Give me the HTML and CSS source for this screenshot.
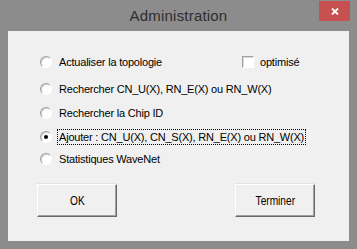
FILE: index.html
```html
<!DOCTYPE html>
<html lang="fr">

<head>
    <meta charset="UTF-8">
    <title>Administration</title>
    <link rel="stylesheet" href="styles.css">
</head>

<body>
    <div class="window">
        <div class="titlebar">
            <span class="title">Administration</span>
            <span class="close">
                <svg width="8" height="7" viewBox="0 0 8 7">
                    <path d="M1 0.5 L7 6.5 M7 0.5 L1 6.5" stroke="#fff" stroke-width="1.8" fill="none"/>
                </svg>
            </span>
        </div>

        <div class="client">
            <div class="options">
                <div class="row row-first">
                    <label class="option option-main"><span class="radio"></span><span class="text">Actualiser la topologie</span></label>
                    <label class="option"><span class="check"></span><span class="text">optimisé</span></label>
                </div>
                <div class="row row-second">
                    <label class="option"><span class="radio"></span><span class="text">Rechercher CN_U(X), RN_E(X) ou RN_W(X)</span></label>
                </div>
                <div class="row">
                    <label class="option"><span class="radio"></span><span class="text">Rechercher la Chip ID</span></label>
                </div>
                <div class="row">
                    <label class="option"><span class="radio checked"></span><span class="text focus">Ajouter : CN_U(X), CN_S(X), RN_E(X) ou RN_W(X)</span></label>
                </div>
                <div class="row row-last">
                    <label class="option"><span class="radio"></span><span class="text">Statistiques WaveNet</span></label>
                </div>
            </div>

            <div class="buttons">
                <button class="btn" type="button"><span>OK</span></button>
                <button class="btn" type="button"><span>Terminer</span></button>
            </div>
        </div>
    </div>
</body>

</html>
```

FILE: styles.css
```css
/* Window frame */
body {
    margin: 0;
    padding: 0;
    font-family: "Liberation Sans", Arial, sans-serif;
}

.window {
    width: 357px;
    height: 249px;
    box-sizing: border-box;
    background-color: #8c8c8c;
    padding: 0 8px 8px 8px;
    display: flex;
    flex-direction: column;
}

.titlebar {
    position: relative;
    height: 31px;
    display: flex;
    align-items: center;
    justify-content: center;
}

.title {
    font-size: 15px;
    color: #2e2e2e;
    letter-spacing: 0.2px;
    margin-bottom: 1px;
}

.close {
    position: absolute;
    top: 1px;
    right: -1px;
    width: 31px;
    height: 20px;
    background-color: #c75050;
    display: flex;
    align-items: center;
    justify-content: center;
}

/* Client area */
.client {
    flex: 1;
    background-color: #f0f0f0;
    padding: 24px 0 0 32px;
}

.row {
    display: flex;
    align-items: center;
    height: 14px;
    margin-top: 10px;
}

.row-first {
    margin-top: 0;
}

.row-second {
    margin-top: 13px;
}

.row-last {
    margin-top: 8px;
}

.option {
    display: flex;
    align-items: center;
    font-size: 11px;
    line-height: 14px;
    letter-spacing: -0.2px;
    color: #000;
}

.option-main {
    width: 202px;
}

.radio {
    position: relative;
    width: 12px;
    height: 12px;
    box-sizing: border-box;
    border-radius: 50%;
    border: 1px solid;
    border-color: #a0a0a0 #ffffff #ffffff #a0a0a0;
    background-color: #fff;
    box-shadow: inset 1px 1px 0 #d0d0d0;
    margin-right: 6px;
}

.radio.checked::after {
    content: "";
    position: absolute;
    left: 3px;
    top: 3px;
    width: 4px;
    height: 4px;
    border-radius: 50%;
    background-color: #000;
}

.check {
    width: 12px;
    height: 12px;
    box-sizing: border-box;
    border: 1px solid;
    border-color: #a0a0a0 #ffffff #ffffff #a0a0a0;
    background-color: #fff;
    box-shadow: inset 1px 1px 0 #d8d8d8;
    margin-right: 5px;
}

.text {
    padding: 0 1px;
}

.focus {
    outline: 1px dotted #000;
}

/* Buttons */
.buttons {
    display: flex;
    margin-top: 18px;
    margin-left: -3px;
}

.btn {
    width: 80px;
    height: 33px;
    box-sizing: border-box;
    background-color: #f0f0f0;
    border: 1px solid;
    border-color: #ffffff #696969 #696969 #ffffff;
    box-shadow: inset -1px -1px 0 #a0a0a0, 0 -1px 0 #e3e3e3;
    padding: 0;
    font-family: "Liberation Sans", Arial, sans-serif;
    font-size: 13px;
    color: #000;
}

.btn span {
    display: inline-block;
    transform: scaleX(0.78);
}

.btn + .btn {
    margin-left: 118px;
}
```
